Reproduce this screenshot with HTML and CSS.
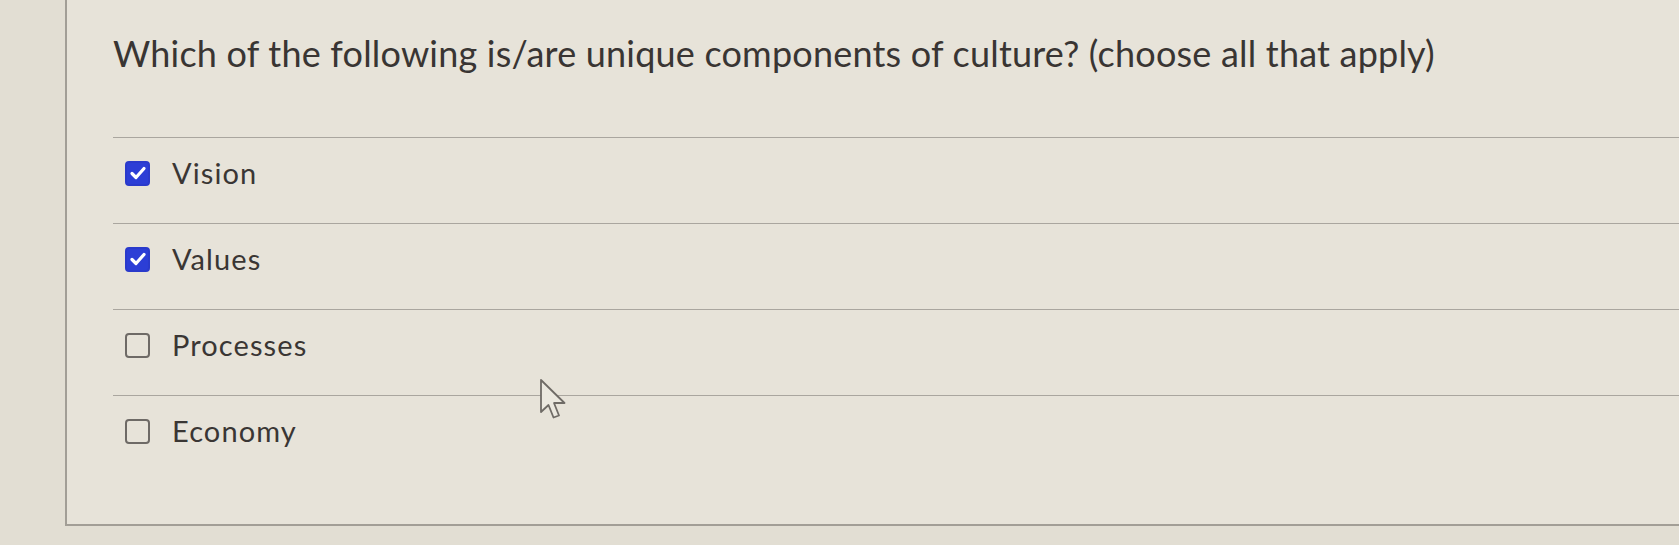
FILE: index.html
```html
<!DOCTYPE html>
<html lang="en">
<head>
<meta charset="utf-8">
<title>Quiz question</title>
<link rel="stylesheet" href="styles.css">
</head>
<body>
<div class="page">
  <section class="quiz-box">
    <h2 class="question">Which of the following is/are unique components of culture? (choose all that apply)</h2>
    <ul class="answers">
      <li class="answer">
        <span class="box checked"><svg viewBox="0 0 24 24" width="24" height="24"><path d="M6 12.5l4 4 8-9" fill="none" stroke="#fff" stroke-width="3.2" stroke-linecap="round" stroke-linejoin="round"/></svg></span>
        <span class="label">Vision</span>
      </li>
      <li class="answer">
        <span class="box checked"><svg viewBox="0 0 24 24" width="24" height="24"><path d="M6 12.5l4 4 8-9" fill="none" stroke="#fff" stroke-width="3.2" stroke-linecap="round" stroke-linejoin="round"/></svg></span>
        <span class="label">Values</span>
      </li>
      <li class="answer">
        <span class="box"></span>
        <span class="label">Processes</span>
      </li>
      <li class="answer">
        <span class="box"></span>
        <span class="label">Economy</span>
      </li>
    </ul>
  </section>
  <svg class="cursor" width="32" height="44" viewBox="0 0 32 44">
    <path d="M2 2 L2 34 L9.5 27 L14.5 39.5 L20 37.5 L15 25 L25.5 25 Z" fill="#ebe8df" stroke="#6f6b66" stroke-width="1.8" stroke-linejoin="round"/>
  </svg>
</div>
</body>
</html>
```

FILE: styles.css
```css
html, body {
  margin: 0;
  padding: 0;
}
body {
  background: #e2ded3;
  font-family: Lato, "Open Sans", sans-serif;
  color: #3a3634;
  overflow: hidden;
}
.page {
  position: relative;
  width: 1679px;
  height: 545px;
  padding-left: 65px;
  box-sizing: border-box;
}
.quiz-box {
  height: 526px;
  box-sizing: border-box;
  border-left: 2px solid #a29e96;
  border-bottom: 2px solid #a29e96;
  background: #e7e3d9;
  padding-left: 46px;
}
.question {
  margin: 0;
  padding-top: 32px;
  font-size: 36px;
  letter-spacing: 0.2px;
  line-height: 42px;
  font-weight: 400;
  color: #393533;
  margin-bottom: 63px;
  white-space: nowrap;
}
.answers {
  list-style: none;
  margin: 0;
  padding: 0;
}
.answer {
  display: flex;
  align-items: center;
  gap: 22px;
  border-top: 1.5px solid #aaa69f;
  padding: 19px 0 34px 12px;
  font-size: 29px;
  letter-spacing: 1.1px;
  line-height: 32px;
  color: #3a3634;
}
.box {
  width: 25px;
  height: 25px;
  box-sizing: border-box;
  border-radius: 4px;
  border: 2.5px solid #6e6a66;
  display: flex;
  align-items: center;
  justify-content: center;
  flex: none;
}
.box.checked {
  background: #2c3ed6;
  border-color: #2a3acb;
}
.box svg {
  display: block;
  flex: none;
}
.cursor {
  position: absolute;
  left: 539px;
  top: 378px;
}
```
